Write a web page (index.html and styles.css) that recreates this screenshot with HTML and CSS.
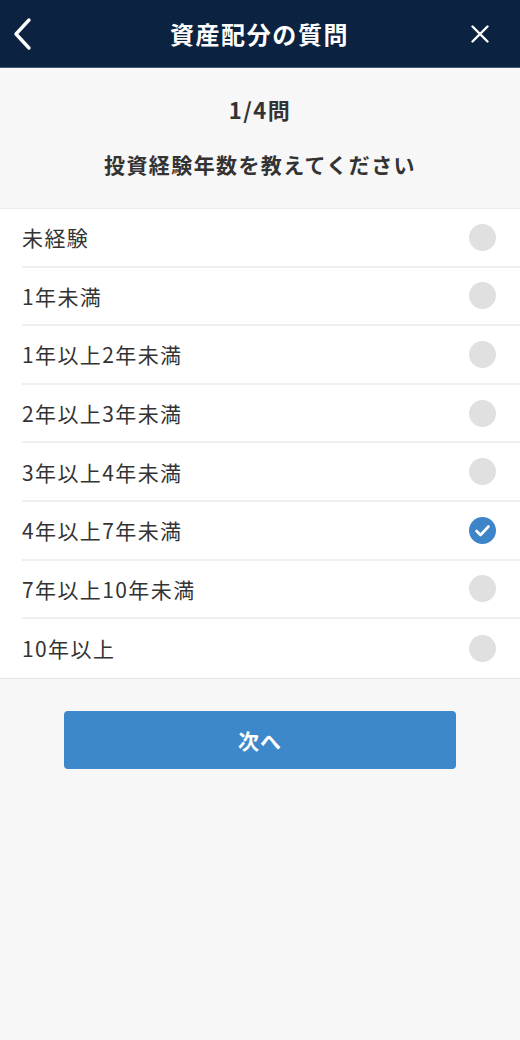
FILE: index.html
```html
<!DOCTYPE html>
<html lang="ja">
<head>
<meta charset="utf-8">
<link rel="stylesheet" href="styles.css">
</head>
<body>
<header class="topbar">
  <button class="icon-btn back" aria-label="戻る">
    <svg width="22" height="34" viewBox="0 0 22 34"><path d="M17 3 L4 17 L17 31" fill="none" stroke="#fff" stroke-width="3.4" stroke-linecap="round" stroke-linejoin="round"/></svg>
  </button>
  <h1 class="title">資産配分の質問</h1>
  <button class="icon-btn close" aria-label="閉じる">
    <svg width="20" height="20" viewBox="0 0 20 20"><path d="M2.5 2.5 L17.5 17.5 M17.5 2.5 L2.5 17.5" fill="none" stroke="#fff" stroke-width="2.4" stroke-linecap="round"/></svg>
  </button>
</header>
<main class="content">
  <section class="question">
    <p class="step">1/4問</p>
    <p class="q-text">投資経験年数を教えてください</p>
  </section>
  <ul class="options">
    <li class="option"><span>未経験</span><i class="radio"></i></li>
    <li class="option"><span>1年未満</span><i class="radio"></i></li>
    <li class="option"><span>1年以上2年未満</span><i class="radio"></i></li>
    <li class="option"><span>2年以上3年未満</span><i class="radio"></i></li>
    <li class="option"><span>3年以上4年未満</span><i class="radio"></i></li>
    <li class="option"><span>4年以上7年未満</span><i class="radio checked"><svg width="27" height="27" viewBox="0 0 27 27"><path d="M7.5 14 L11.5 18 L19.5 9.5" fill="none" stroke="#fff" stroke-width="2.6" stroke-linecap="round" stroke-linejoin="round"/></svg></i></li>
    <li class="option"><span>7年以上10年未満</span><i class="radio"></i></li>
    <li class="option"><span>10年以上</span><i class="radio"></i></li>
  </ul>
  <div class="actions">
    <button class="next">次へ</button>
  </div>
</main>
</body>
</html>
```
FILE: styles.css
```css
* { box-sizing: border-box; }
html, body { margin: 0; padding: 0; }
body {
  background: #f7f7f7;
  font-family: "Noto Sans CJK JP", "Noto Sans", sans-serif;
  color: #333;
  width: 520px;
  min-height: 1040px;
}
.topbar {
  height: 68px;
  background: #0b2240;
  border-bottom: 1px solid #4a5a74;
  display: flex;
  align-items: center;
  justify-content: space-between;
  padding: 0 10px 0 10px;
}
.icon-btn {
  background: none;
  border: 0;
  padding: 0;
  width: 34px;
  height: 40px;
  display: flex;
  align-items: center;
  justify-content: center;
}
.back { justify-content: flex-start; padding-left: 2px; }
.close { justify-content: center; margin-right: 13px; }
.title {
  margin: 0 0 0 12px;
  font-size: 24px;
  font-weight: 700;
  color: #fff;
  letter-spacing: 1.6px;
}
.question {
  height: 140px;
  display: flex;
  flex-direction: column;
  align-items: center;
  padding-top: 26px;
}
.step {
  margin: 0;
  font-size: 22px;
  font-weight: 700;
  line-height: 30px;
  color: #333;
  letter-spacing: 1.5px;
}
.q-text {
  margin: 25px 0 0;
  font-size: 21px;
  font-weight: 700;
  line-height: 30px;
  color: #333;
  letter-spacing: 1.4px;
}
.options {
  list-style: none;
  margin: 0;
  padding: 0 0 0 22px;
  background: #fff;
  border-top: 1px solid #ececec;
  border-bottom: 1px solid #e6e6e6;
}
.option {
  height: 58.6px;
  display: flex;
  align-items: center;
  justify-content: space-between;
  padding-right: 24px;
  font-size: 21px;
  letter-spacing: 1.4px;
  color: #333;
  border-bottom: 2px solid #efefef;
}
.option:last-child { border-bottom: 0; }
.radio {
  width: 27px;
  height: 27px;
  border-radius: 50%;
  background: #e0e0e0;
  display: flex;
  align-items: center;
  justify-content: center;
}
.radio.checked { background: #3d85c8; }
.actions {
  display: flex;
  justify-content: center;
  padding-top: 32px;
}
.next {
  width: 392px;
  height: 58px;
  border: 0;
  border-radius: 4px;
  background: #3d88cb;
  color: #fff;
  font-family: inherit;
  font-size: 21px;
  font-weight: 700;
  letter-spacing: 1px;
}
```
